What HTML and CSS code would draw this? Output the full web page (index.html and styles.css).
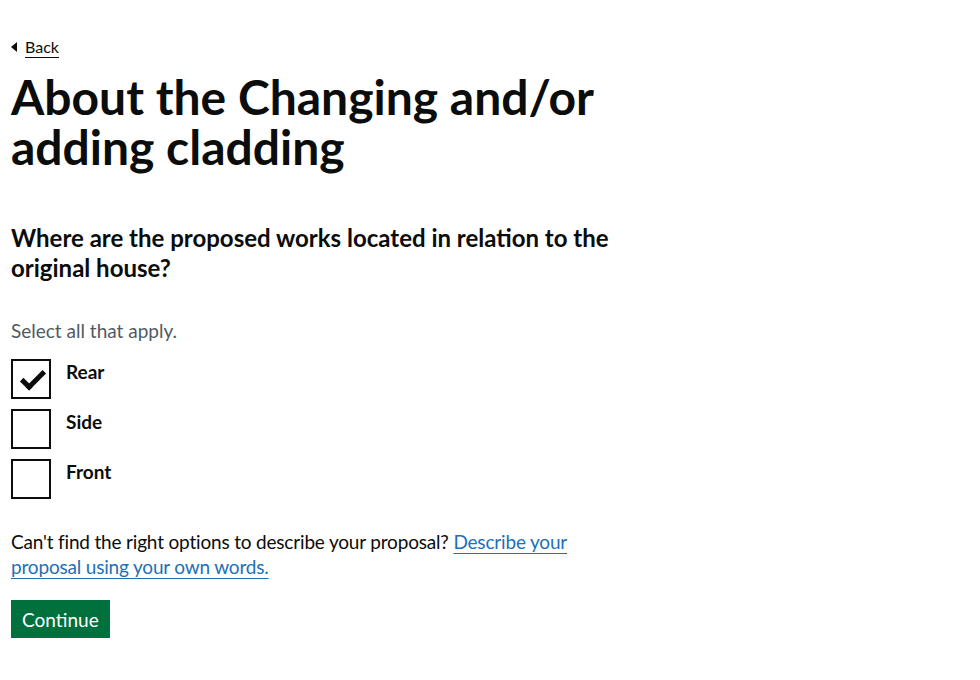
FILE: index.html
```html
<!DOCTYPE html>
<html lang="en">
<head>
<meta charset="utf-8">
<title>About the Changing and/or adding cladding</title>
<link rel="stylesheet" href="styles.css">
</head>
<body>
<main class="page">
  <a class="back-link" href="#">Back</a>
  <h1 class="title">About the Changing and/or adding cladding</h1>
  <fieldset class="fieldset">
    <legend class="legend">Where are the proposed works located in relation to the original house?</legend>
    <div class="hint">Select all that apply.</div>
    <div class="checkboxes">
      <label class="checkbox">
        <span class="box checked"></span>
        <span class="label-text">Rear</span>
      </label>
      <label class="checkbox">
        <span class="box"></span>
        <span class="label-text">Side</span>
      </label>
      <label class="checkbox">
        <span class="box"></span>
        <span class="label-text">Front</span>
      </label>
    </div>
  </fieldset>
  <p class="body-text">Can't find the right options to describe your proposal? <a class="link" href="#">Describe your proposal using your own words.</a></p>
  <button class="button" type="button">Continue</button>
</main>
</body>
</html>
```
FILE: styles.css
```css
* { box-sizing: border-box; }
html, body { margin: 0; padding: 0; background: #fff; }
body {
  font-family: Lato, "Liberation Sans", sans-serif;
  color: #0b0c0c;
}
.page {
  padding: 38px 11px 0 11px;
  width: 642px;
  display: flex;
  flex-direction: column;
  align-items: flex-start;
}
.back-link {
  position: relative;
  display: inline-block;
  font-size: 16px;
  line-height: 18px;
  color: #0b0c0c;
  text-decoration: underline;
  text-decoration-thickness: 1px;
  text-underline-offset: 4px;
  padding-left: 14px;
}
.back-link::before {
  content: "";
  position: absolute;
  left: 0;
  top: 4px;
  border-style: solid;
  border-color: transparent #0b0c0c transparent transparent;
  border-width: 5px 6px 5px 0;
}
.title {
  font-size: 48px;
  line-height: 50px;
  font-weight: 700;
  margin: 16px 0 0 0;
  width: 620px;
}
.fieldset { border: 0; padding: 0; margin: 51px 0 0 0; min-width: 0; }
.legend {
  padding: 0;
  font-size: 24px;
  line-height: 30px;
  font-weight: 700;
  width: 620px;
}
.hint {
  margin-top: 35px;
  font-size: 19px;
  line-height: 25px;
  color: #505a5f;
}
.checkboxes { margin-top: 16px; display: flex; flex-direction: column; gap: 10px; }
.checkbox { display: flex; align-items: flex-start; gap: 15px; }
.box {
  width: 40px; height: 40px;
  border: 2px solid #0b0c0c;
  position: relative;
  flex: none;
}
.box.checked::after {
  content: "";
  position: absolute;
  left: 8px; top: 10px;
  width: 19px; height: 8px;
  border: solid #0b0c0c;
  border-width: 0 0 5px 5px;
  transform: rotate(-45deg);
}
.label-text {
  font-size: 19px;
  line-height: 25px;
  font-weight: 700;
}
.body-text {
  font-size: 19px;
  line-height: 25px;
  letter-spacing: -0.18px;
  margin: 30px 0 0 0;
  width: 620px;
}
.link { color: #1d70b8; text-decoration: underline; text-decoration-thickness: 1px; text-underline-offset: 4px; }
.button {
  margin-top: 21px;
  font-family: inherit;
  font-size: 19px;
  line-height: 19px;
  color: #fff;
  background: #00703c;
  border: 2px solid transparent;
  border-radius: 0;
  padding: 8px 9px 7px;
  box-shadow: 0 2px 0 #002d18;
}
```
